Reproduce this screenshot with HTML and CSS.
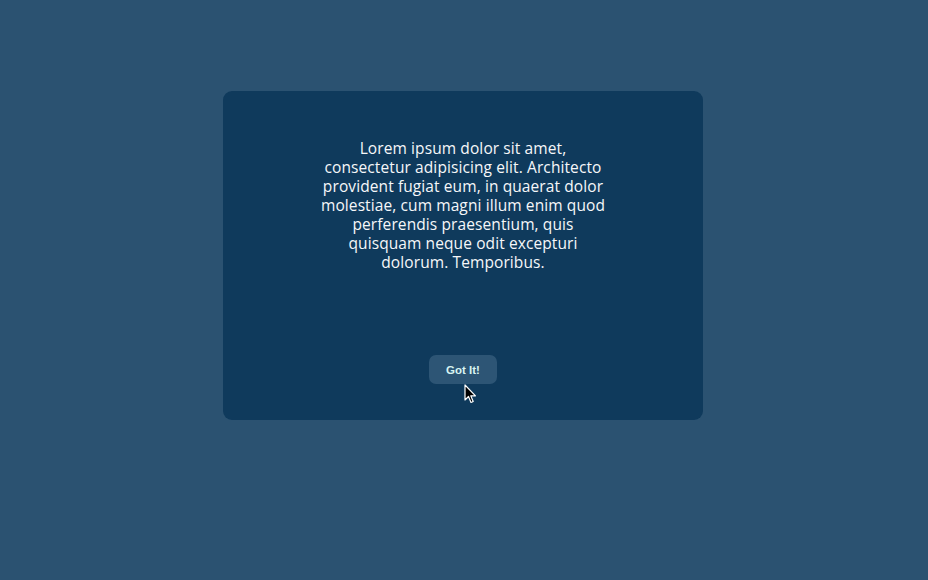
FILE: index.html
```html
<!DOCTYPE html>
<html>
<head>
<meta charset="utf-8">
<link rel="stylesheet" href="styles.css">
</head>
<body>
<div class="page">
  <div class="card">
    <p class="message">Lorem ipsum dolor sit amet, consectetur adipisicing elit. Architecto provident fugiat eum, in quaerat dolor molestiae, cum magni illum enim quod perferendis praesentium, quis quisquam neque odit excepturi dolorum. Temporibus.</p>
    <div class="actions">
      <button class="btn">Got It!</button>
      <svg class="cursor" width="13" height="20" viewBox="0 0 13 20"><path d="M1 1 L1 16 L4.5 12.5 L7 18.5 L9.2 17.5 L6.8 11.8 L11.5 11.8 Z" fill="#000" stroke="#fff" stroke-width="1.2" stroke-linejoin="round"/></svg>
    </div>
  </div>
</div>
</body>
</html>
```
FILE: styles.css
```css
html, body {
  margin: 0;
  padding: 0;
  background: #2b5271;
  width: 100%;
  height: 100%;
}
.page {
  display: flex;
  justify-content: center;
  padding-top: 91px;
  padding-right: 2px;
}
.card {
  width: 480px;
  height: 329px;
  box-sizing: border-box;
  background: #0f3a5c;
  border-radius: 9px;
  display: flex;
  flex-direction: column;
  align-items: center;
  padding: 48px 0 36px;
}
.message {
  margin: 0;
  width: 296px;
  text-align: center;
  color: #f6f7f9;
  font-family: "Open Sans", "Noto Sans", sans-serif;
  font-size: 15.5px;
  line-height: 19px;
  letter-spacing: 0.1px;
}
.actions {
  margin-top: auto;
  position: relative;
}
.btn {
  width: 68px;
  height: 29px;
  border: none;
  border-radius: 7px;
  background: #2d5575;
  color: #d8f4f2;
  font-family: "Liberation Sans", Arial, sans-serif;
  font-weight: bold;
  font-size: 11.5px;
  padding: 0;
  display: block;
}
.cursor {
  position: absolute;
  left: 35px;
  top: 29px;
}
```
